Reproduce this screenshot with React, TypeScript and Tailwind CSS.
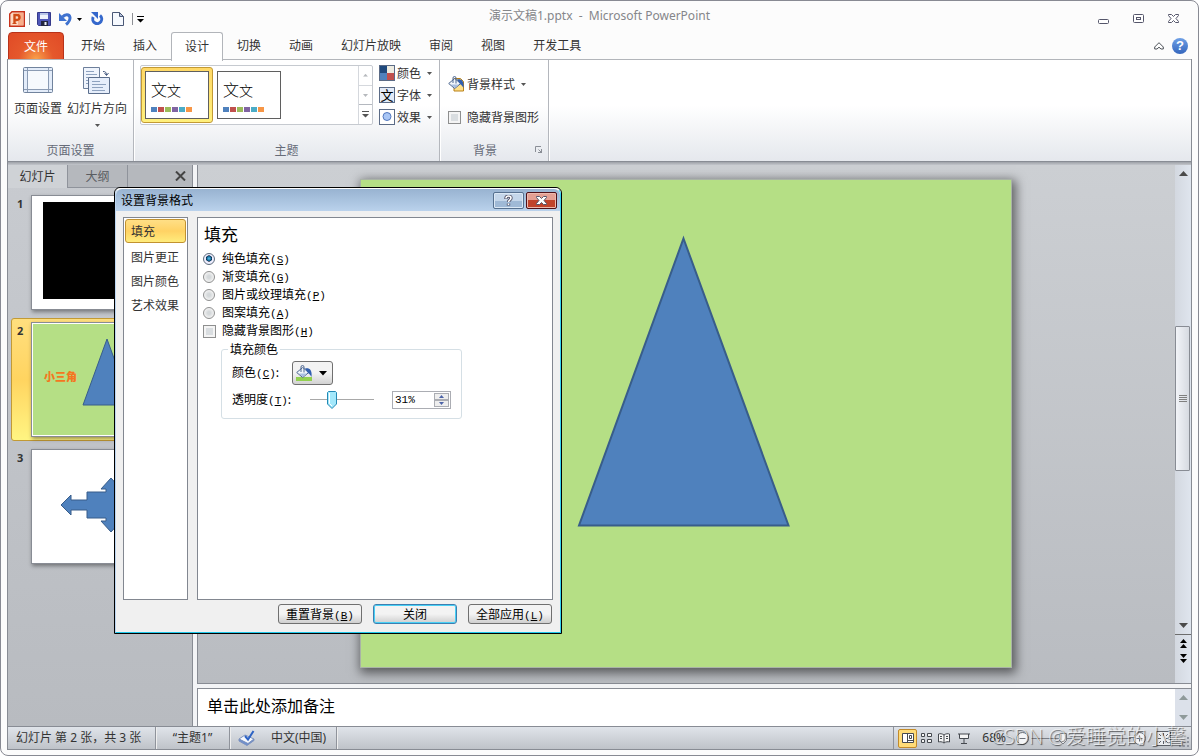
import { useState, type ReactNode } from 'react';

const TABS = ['开始', '插入', '设计', '切换', '动画', '幻灯片放映', '审阅', '视图', '开发工具'];
const FILLS = [
  ['纯色填充', 'S'],
  ['渐变填充', 'G'],
  ['图片或纹理填充', 'P'],
  ['图案填充', 'A'],
];
const NAV = ['填充', '图片更正', '图片颜色', '艺术效果'];

function Caret({ className = 'text-[#555]' }: { className?: string }) {
  return (
    <svg width="5" height="3" viewBox="0 0 5 3" className={className} aria-hidden>
      <path d="M0 0h5L2.5 3z" fill="currentColor" />
    </svg>
  );
}

function Arrow({ up, className = 'text-[#4a4a4a]' }: { up?: boolean; className?: string }) {
  return (
    <svg width="9" height="5" viewBox="0 0 9 5" className={className} aria-hidden>
      <path d={up ? 'M0 5h9L4.5 0z' : 'M0 0h9L4.5 5z'} fill="currentColor" />
    </svg>
  );
}

function Bucket({ page, swatch }: { page?: boolean; swatch?: boolean }) {
  return (
    <svg width="17" height="17" viewBox="0 0 17 17" aria-hidden>
      {page && <path d="M6 2.500h6.500l3 3v9.500H6z" fill="#ffe08a" stroke="#b98118" />}
      {swatch && <path d="M0 12h16v4H0z" fill="#92d050" />}
      <path d="M.7 7.500l6-5 6 5-6 5z" fill="#f2f6fc" stroke="#4d6690" />
      <path d="M3 8.500h8l-4.300 3.500z" fill="#a9bfe2" />
      <path d="M5 7V2a1.500 1.500 0 0 1 3 0v5.500" fill="none" stroke="#4d6690" />
      <path d="M9 3.500c4-1 7.500 1 6.500 8.500-1-2-2-3-3.500-4z" fill="#315fb0" />
    </svg>
  );
}

function Key({ k }: { k: string }) {
  return (
    <span className="font-['Liberation_Mono',monospace] text-[11px]">
      (<u>{k}</u>)
    </span>
  );
}

function TitleBar() {
  return (
    <div className="grid h-[31px] grid-cols-[1fr_auto_1fr] items-start">
      <div className="flex h-[36px] items-center pl-[2px]">
        <svg width="16" height="16" viewBox="0 0 16 16" aria-hidden>
          <path d="M3 .7h12.300v14.600H.7V3z" fill="#fdd9c4" stroke="#c8321b" strokeWidth="1.400" />
          <path d="M9 2h5v12H9z" fill="#f8ae8a" />
          <path d="M5.500 12.500V4H8a2.300 2.300 0 0 1 0 5H6" fill="none" stroke="#d04b16" strokeWidth="2.400" />
          <path d="M3.500 12.500h4" stroke="#d04b16" strokeWidth="1.200" />
        </svg>
        <span className="ml-1 h-3 w-px bg-[#8d8f94]" />
        <button aria-label="保存" className="ml-[7px]">
          <svg width="14" height="14" viewBox="0 0 14 14">
            <path d="M.5.5h13v13h-12l-1-1z" fill="#4f57b8" stroke="#34398a" />
            <path d="M3 1h8v6H3z" fill="#eef2fb" />
            <path d="M3 1h8v2H3z" fill="#b9c6e8" />
            <path d="M4 9h7v5H4z" fill="#23263f" />
            <path d="M7.500 10h2v3h-2z" fill="#eef2fb" />
          </svg>
        </button>
        <button aria-label="撤消" className="ml-2">
          <svg width="14" height="14" viewBox="0 0 14 14">
            <path d="M3.500 5C6 1.800 10.500 2 11 5.500c.3 3-1.500 5-4 7" fill="none" stroke="#3f72cf" strokeWidth="3" />
            <path d="M0 1v8h8z" fill="#3f72cf" />
          </svg>
        </button>
        <button aria-label="撤消列表" className="ml-1">
          <Caret className="text-black" />
        </button>
        <button aria-label="重复" className="ml-2">
          <svg width="14" height="14" viewBox="0 0 14 14">
            <path d="M3.200 5a4.500 4.500 0 1 0 6.800-1.500" fill="none" stroke="#3568cc" strokeWidth="3" />
            <path d="M1 0h7v7z" fill="#3568cc" />
          </svg>
        </button>
        <button aria-label="新建" className="ml-2">
          <svg width="12" height="14" viewBox="0 0 12 14">
            <path d="M.5.5h7l4 4v9H.5z" fill="#f6f9fe" stroke="#4a5876" />
            <path d="M7.500.5v4h4z" fill="#b6c3dc" stroke="#4a5876" />
          </svg>
        </button>
        <span className="ml-2 h-3 w-px bg-[#8d8f94]" />
        <button aria-label="自定义快速访问工具栏" className="ml-1">
          <svg width="7" height="7" viewBox="0 0 7 7">
            <path d="M0 0h7v1H0zM0 3h7L3.500 6.500z" />
          </svg>
        </button>
      </div>
      <div className="h-[31px] font-['Noto_Sans','Noto_Sans_CJK_SC',sans-serif] text-xs leading-[30px] whitespace-pre text-[#85868a]">
        演示文稿1.pptx  -  Microsoft PowerPoint
      </div>
      <div className="flex h-[35px] items-center justify-end gap-6 pr-[13px]">
        <button aria-label="最小化">
          <svg width="11" height="10" viewBox="0 0 11 10" fill="#fff" stroke="#55566b">
            <rect x=".5" y="5.500" width="10" height="4" rx="1" />
          </svg>
        </button>
        <button aria-label="还原">
          <svg width="11" height="9" viewBox="0 0 11 9" fill="#fff" stroke="#55566b">
            <rect x=".5" y=".5" width="10" height="8" rx="1" />
            <rect x="3.500" y="3.500" width="4" height="2" />
          </svg>
        </button>
        <button aria-label="关闭窗口">
          <svg width="11" height="9" viewBox="0 0 11 9" fill="#fff" stroke="#55566b">
            <path d="M.5.5h3l2 2 2-2h3v1L8 4.500l2.500 3v1h-3l-2-2-2 2h-3v-1L3 4.500.5 1.500z" />
          </svg>
        </button>
      </div>
    </div>
  );
}

function RibbonTabs() {
  return (
    <div className="flex h-[28px] items-stretch text-xs leading-[26px] text-[#333]">
      <button className="mr-[3px] w-14 rounded-t border border-[#b8321a] bg-[radial-gradient(ellipse_at_bottom,#f9a04a_0%,#e5582c_45%,#e04a26_100%)] pb-px text-white">
        文件
      </button>
      <nav className="flex">
        {TABS.map((t) => (
          <button
            key={t}
            className={
              t === '设计'
                ? 'z-10 -mb-px rounded-t-[3px] border border-b-0 border-[#b2b5ba] bg-white px-[13px] pb-[3px]'
                : 'px-[14px] pb-[2px]'
            }
          >
            {t}
          </button>
        ))}
      </nav>
      <div className="ml-auto flex items-center gap-2 pr-1 pb-px">
        <button aria-label="功能区最小化">
          <svg width="10" height="8" viewBox="0 0 10 8" fill="#fff" stroke="#4c5158">
            <path d="M5 .7L9.300 5v2H7L5 5.200 3 7H.7V5z" />
          </svg>
        </button>
        <button
          aria-label="帮助"
          className="h-4 w-4 rounded-full bg-linear-to-b from-[#6fa0e6] to-[#3566bd] font-['Liberation_Sans',sans-serif] text-[13px] leading-4 font-bold text-white"
        >
          ?
        </button>
      </div>
    </div>
  );
}

function Group({ label, className = '', children, corner }: { label: string; className?: string; children: ReactNode; corner?: ReactNode }) {
  return (
    <section className={'flex flex-col border-r border-[#b4b7bd] shadow-[1px_0_0_#fff] ' + className}>
      <div className="flex-1">{children}</div>
      <div className="flex h-[22px] items-center text-xs text-[#666b78]">
        <span className="flex-1 text-center">{label}</span>
        {corner}
      </div>
    </section>
  );
}

function ThemeCard({ selected }: { selected?: boolean }) {
  return (
    <button
      className={
        'h-14 w-[72px] rounded-[3px] border p-[3px] ' +
        (selected ? 'border-[#c29a35] bg-linear-to-b from-[#ffd866] to-[#fff07c]' : 'border-transparent')
      }
    >
      <span className="flex h-full flex-col justify-between border border-[#5f5f5f] bg-white px-[5px] pt-[5px] pb-[6px]">
        <span className="text-left leading-[26px] font-light text-black">
          <span className="text-base">文</span>
          <span className="text-sm">文</span>
        </span>
        <span className="flex gap-px">
          <i className="h-[5px] w-[6px] bg-[#4f81bd]" />
          <i className="h-[5px] w-[6px] bg-[#c0504d]" />
          <i className="h-[5px] w-[6px] bg-[#9bbb59]" />
          <i className="h-[5px] w-[6px] bg-[#8064a2]" />
          <i className="h-[5px] w-[6px] bg-[#4bacc6]" />
          <i className="h-[5px] w-[6px] bg-[#f79646]" />
        </span>
      </span>
    </button>
  );
}

function Ribbon() {
  return (
    <div className="flex h-[103px] border-y border-t-[#b2b5ba] border-b-[#888c94] bg-linear-to-b from-white from-45% to-[#e5e8ed] text-xs text-[#333]">
      <Group label="页面设置" className="w-[126px]">
        <div className="flex gap-[5px] pt-[7px] pl-[6px]">
          <button className="flex w-12 flex-col items-center">
            <svg width="30" height="26" viewBox="0 0 30 26" fill="none">
              <rect x=".5" y=".5" width="29" height="25" rx="1" fill="#e3ecf9" stroke="#71839d" />
              <path d="M5 4h20v18H5z" fill="#f6f9fd" />
              <path d="M4.500 1v24M25.500 1v24M1 3.500h28M1 22.500h28" stroke="#8b9bb3" />
            </svg>
            <span className="mt-[6px] leading-[18px]">页面设置</span>
          </button>
          <button className="flex w-[60px] flex-col items-center">
            <svg width="28" height="28" viewBox="0 0 28 28" fill="none">
              <path d="M.5.500h16v21H.5z" fill="#eff4fc" stroke="#6d7f9b" />
              <path d="M3 4.500h8M3 7.500h11M3 10.500h2M3 13.500h2M3 16.500h2" stroke="#8ea2bf" />
              <path d="M5.500 10.500h21v16h-21z" fill="#e6eefb" stroke="#5b6e8c" />
              <path d="M9 14.500h8M9 17.500h14M9 20.500h11M9 23.500h13" stroke="#8ea2bf" />
              <path d="M20 4.500c2.500 0 3.500 1 3.500 3.500M21.500 6l2 2.500 2-2.500" stroke="#3f557c" />
            </svg>
            <span className="mt-1 leading-[18px]">幻灯片方向</span>
            <span className="mt-[7px]"><Caret /></span>
          </button>
        </div>
      </Group>
      <Group label="主题" className="w-[306px]">
        <div className="flex pt-[5px] pl-[6px]">
          <div className="flex h-[60px] w-[233px] rounded-[2px] border border-[#c6cad0] bg-white">
            <div className="flex flex-1 pt-px">
              <ThemeCard selected />
              <ThemeCard />
            </div>
            <div className="flex w-[14px] flex-col border-l border-[#d5d8dd]">
              <button aria-label="上一行" className="flex flex-1 rotate-180 items-center justify-center"><Caret className="text-[#b6b9bd]" /></button>
              <button aria-label="下一行" className="flex flex-1 items-center justify-center border-t border-[#d5d8dd]"><Caret className="text-[#b6b9bd]" /></button>
              <button aria-label="其他主题" className="flex flex-1 items-center justify-center border-t border-[#b4b8bf]">
                <svg width="7" height="7" viewBox="0 0 7 7" fill="#555">
                  <path d="M0 0h7v1H0zM0 3h7L3.500 6.500z" />
                </svg>
              </button>
            </div>
          </div>
          <div className="ml-[6px] flex flex-col gap-[6px]">
            <button className="flex h-4 items-center gap-[2px]">
              <svg width="16" height="16" viewBox="0 0 16 16">
                <path d="M0 0h16v16H0z" fill="#5b6b86" />
                <path d="M1 1h7v7H1z" fill="#1f497d" />
                <path d="M8 1h7v7H8z" fill="#eeece1" />
                <path d="M1 8h7v7H1z" fill="#4f81bd" />
                <path d="M8 8h7v7H8z" fill="#c0504d" />
              </svg>
              <span className="mr-1">颜色</span>
              <Caret />
            </button>
            <button className="flex h-4 items-center gap-[2px]">
              <span className="h-4 w-4 border border-[#5b6b86] bg-[#e3ebf8] text-[13px] leading-[13px] text-black">文</span>
              <span className="mr-1">字体</span>
              <Caret />
            </button>
            <button className="flex h-4 items-center gap-[2px]">
              <svg width="16" height="16" viewBox="0 0 16 16">
                <rect x=".5" y=".5" width="15" height="15" fill="#fff" stroke="#5b6b86" />
                <circle cx="8" cy="7.500" r="4" fill="#a9c6f5" stroke="#5277bd" />
              </svg>
              <span className="mr-1">效果</span>
              <Caret />
            </button>
          </div>
        </div>
      </Group>
      <Group
        label="背景"
        className="w-[109px]"
        corner={
          <button aria-label="设置背景格式" className="mr-[5px] ml-[5px]">
            <svg width="8" height="8" viewBox="0 0 8 8" fill="none" stroke="#8a8e96">
              <path d="M.5 6V.5H6M3.500 3.500l3 3M6.500 3v4M3 6.500h4" />
            </svg>
          </button>
        }
      >
        <div className="flex flex-col gap-[15px] pt-[15px] pl-2">
          <button className="flex h-[18px] items-center gap-[2px]">
            <Bucket page />
            <span className="mr-1">背景样式</span>
            <Caret />
          </button>
          <label className="flex h-[18px] items-center gap-[6px]">
            <input type="checkbox" className="h-[13px] w-[13px] appearance-none border border-[#8e8f8f] bg-[#d9dde0] shadow-[inset_0_0_0_2px_#f4f4f4]" />
            隐藏背景图形
          </label>
        </div>
      </Group>
    </div>
  );
}

function Thumb({ n, selected, children }: { n: number; selected?: boolean; children: ReactNode }) {
  return (
    <li
      className={
        'flex h-[123px] items-start rounded-[3px] border py-[3px] pl-[5px] ' +
        (selected ? 'border-[#c29a35] bg-linear-to-b from-[#ffdf7e] via-[#ffd460] to-[#fff582]' : 'border-transparent')
      }
    >
      <b className="w-[14px] font-['Open_Sans',sans-serif] text-[11px] leading-[18px] text-[#333]">{n}</b>
      <div className="h-[115px] w-[153px] border border-[#888c94] bg-white shadow-[1px_2px_4px_#0006]">{children}</div>
    </li>
  );
}

function SlidePanel() {
  return (
    <aside className="flex w-[185px] flex-col border-r border-[#888c94] bg-linear-to-b from-[#c8cbd0] to-[#b8bbc0] text-xs text-[#333]">
      <div className="flex h-[23px]">
        <button className="w-[59px] bg-[#cfd2d6] pb-[2px]">幻灯片</button>
        <button className="w-[61px] border border-t-0 border-[#8f939b] bg-[#b5b8bd] text-[#5a5c61]">大纲</button>
        <div className="flex flex-1 items-center justify-end border-b border-[#8f939b] bg-[#b5b8bd] pr-[6px]">
          <button aria-label="关闭窗格">
            <svg width="11" height="10" viewBox="0 0 11 10" stroke="#444" strokeWidth="2">
              <path d="M1 .5l9 9M10 .5l-9 9" />
            </svg>
          </button>
        </div>
      </div>
      <ol className="flex flex-col gap-1 pt-[3px] pr-px pl-[3px]">
        <Thumb n={1}>
          <div className="mt-[6px] ml-[11px] h-[97px] w-[130px] bg-black" />
        </Thumb>
        <Thumb n={2} selected>
          <div className="h-full border border-white bg-[#b5df85] pt-[14px] pl-[11px]">
            <div className="flex items-center">
              <span className="pt-2 text-[11px] font-black text-[#f47721]">小三角</span>
              <svg width="50" height="68" viewBox="0 0 50 68" className="ml-[5px] shrink-0" aria-hidden>
                <path d="M25 1l24 66H1z" fill="#4f81bd" stroke="#385d8a" />
              </svg>
            </div>
          </div>
        </Thumb>
        <Thumb n={3}>
          <svg width="151" height="113" viewBox="0 0 151 113" aria-hidden>
            <path
              d="M29 55l10-10v5h16v-8h19v-3h-5l10-11 10 11h-5v3h19v8h16v-5l10 10-10 10v-5h-16v8H84v3h5L79 82 69 71h5v-3H55v-8H39v5z"
              fill="#4f81bd"
              stroke="#385d8a"
            />
          </svg>
        </Thumb>
      </ol>
    </aside>
  );
}

function Editor() {
  return (
    <main className="flex min-w-0 flex-1 flex-col">
      <div className="flex min-h-0 flex-1 border-b border-l border-[#888c94] bg-linear-to-b from-[#cccfd3] to-[#b9bcc1]">
        <div className="flex min-h-0 flex-1 items-center justify-center pt-[14px] pr-px pb-[15px]">
          <div className="aspect-[4/3] h-full border border-[#a9b3a6] bg-[#b5df85] shadow-[2px_3px_10px_2px_#0008]">
            <svg viewBox="0 0 649 487" className="h-full w-full" aria-hidden>
              <path d="M322 58.500L427 345.500H217.500z" fill="#4f81bd" stroke="#385d8a" strokeWidth="2" />
            </svg>
          </div>
        </div>
        <div className="flex w-4 flex-col items-center bg-linear-to-r from-[#d3d8e0] to-[#dfe5ee]">
          <button aria-label="向上滚动" className="flex h-4 items-center"><Arrow up /></button>
          <div className="flex-1" />
          <div className="flex h-[145px] w-[15px] items-center justify-center self-start rounded-[1px] border border-[#888c94] bg-linear-to-r from-[#f2f4f8] to-[#d6dae1]">
            <svg width="8" height="7" viewBox="0 0 8 7" fill="#7f7f7f" aria-hidden>
              <path d="M0 0h8v1H0zM0 2h8v1H0zM0 4h8v1H0zM0 6h8v1H0z" />
            </svg>
          </div>
          <div className="flex-1" />
          <button aria-label="向下滚动" className="flex h-[18px] items-center"><Arrow /></button>
          <div className="flex w-full flex-col items-center gap-[6px] border-t border-[#6d6d6d] pt-1 pb-5">
            <button aria-label="上一张幻灯片">
              <svg width="7" height="9" viewBox="0 0 7 9"><path d="M0 4h7L3.500 0zM0 9h7L3.500 5z" /></svg>
            </button>
            <button aria-label="下一张幻灯片">
              <svg width="7" height="9" viewBox="0 0 7 9"><path d="M0 0h7L3.500 4zM0 5h7L3.500 9z" /></svg>
            </button>
          </div>
        </div>
      </div>
      <div className="mt-1 flex h-[38px] border-t border-l border-[#888c94] bg-white">
        <p className="flex-1 pl-[9px] text-base leading-8 text-black">单击此处添加备注</p>
        <div className="flex w-4 flex-col items-center justify-between bg-[#dce1ea] py-[6px]">
          <Arrow up className="text-[#8f9a9a]" />
          <Arrow className="text-[#8f9a9a]" />
        </div>
      </div>
    </main>
  );
}

function StatusBar() {
  const cell = 'flex items-center border-r border-[#8f939b] shadow-[1px_0_0_#eee]';
  return (
    <footer className="flex h-[24px] border-y border-[#888c94] bg-linear-to-b from-[#e0e4ea] to-[#bfc3c9] font-['Noto_Sans','Noto_Sans_CJK_SC',sans-serif] text-xs text-[#333]">
      <span className={cell + ' w-[148px] pl-2 whitespace-pre'}>幻灯片 第 2 张，共 3 张</span>
      <span className={cell + ' w-[74px] justify-center'}>“主题1”</span>
      <span className={cell + ' w-[107px] gap-4 pl-2'}>
        <svg width="17" height="16" viewBox="0 0 17 16" fill="none" aria-hidden>
          <path d="M1 9l6-4 9 4-6 5.500z" fill="#f5f8fd" stroke="#7d92bd" />
          <path d="M1 9v2l8 4.500 7-5V9l-6 4.500z" fill="#6d8fd0" stroke="#7d92bd" />
          <path d="M7 6l3 3.500L15.500 1" stroke="#2c62c4" strokeWidth="2" />
        </svg>
        中文(中国)
      </span>
      <div className="ml-auto flex items-center border-l border-[#8f939b] pl-1">
        <button aria-label="普通视图" className="flex h-[19px] w-[19px] items-center justify-center rounded-[2px] border border-[#c28a2a] bg-[#ffdc78]">
          <svg width="12" height="10" viewBox="0 0 12 10" fill="#fff" stroke="#45494f">
            <path d="M.5.500h11v9H.5zM5.500.500v9M7.500 2.500h2v3h-2zM5.500 7.500h6" />
          </svg>
        </button>
        <button aria-label="幻灯片浏览" className="ml-1">
          <svg width="11" height="10" viewBox="0 0 11 10" fill="#f5f5f5" stroke="#45494f">
            <path d="M.5.500h3v3h-3zM6.500.500h4v3h-4zM.5 6.500h3v3h-3zM6.500 6.500h4v3h-4z" />
          </svg>
        </button>
        <button aria-label="阅读视图" className="ml-[6px]">
          <svg width="12" height="11" viewBox="0 0 12 11" fill="#f5f5f5" stroke="#45494f">
            <path d="M6 2C4 .5 2 .5.5 1v8C2 8.500 4 8.500 6 10c2-1.500 4-1.500 5.500-1V1C10 .5 8 .5 6 2zM6 2v8M2 3.500h2M2 5.500h2M8 3.500h2M8 5.500h2" />
          </svg>
        </button>
        <button aria-label="幻灯片放映视图" className="ml-2">
          <svg width="12" height="11" viewBox="0 0 12 11" fill="#f5f5f5" stroke="#45494f">
            <path d="M0 1h12M1.500 1v4.500h9V1M6 5.500V10M3 10.500h6" />
          </svg>
        </button>
        <span className="ml-3">68%</span>
        <button aria-label="缩小" className="ml-[10px]">
          <svg width="13" height="13" viewBox="0 0 13 13" fill="#f4f5f7" stroke="#6b6f76">
            <circle cx="6.500" cy="6.500" r="6" />
            <path d="M3.500 6.500h6" />
          </svg>
        </button>
        <div className="relative h-[13px] w-[104px]">
          <svg width="104" height="13" viewBox="0 0 104 13" fill="#f4f5f7" stroke="#7b7f86" aria-hidden>
            <path d="M2 6.500h100M52.500 4v5" />
            <path d="M30.500 1.500h7v7L34 12l-3.500-3.500z" />
          </svg>
          <input type="range" aria-label="显示比例" className="absolute inset-0 w-full opacity-0" />
        </div>
        <button aria-label="放大">
          <svg width="13" height="13" viewBox="0 0 13 13" fill="#f4f5f7" stroke="#6b6f76">
            <circle cx="6.500" cy="6.500" r="6" />
            <path d="M3.500 6.500h6M6.500 3.500v6" />
          </svg>
        </button>
        <button aria-label="适应窗口" className="ml-[10px]">
          <svg width="15" height="15" viewBox="0 0 15 15" fill="none" stroke="#5b5f66">
            <rect x=".5" y=".5" width="14" height="14" fill="#eceef1" />
            <path d="M7.500 2v3M7.500 10v3M2 7.500h3M10 7.500h3M3 3l2 2M12 3l-2 2M3 12l2-2M12 12l-2-2" />
          </svg>
        </button>
        <svg width="11" height="11" viewBox="0 0 11 11" className="mt-2 mr-px ml-2" fill="#9095a0" aria-hidden>
          <path d="M8 0h2v2H8zM4 4h2v2H4zM8 4h2v2H8zM0 8h2v2H0zM4 8h2v2H4zM8 8h2v2H8z" />
        </svg>
      </div>
    </footer>
  );
}

function FormatDialog() {
  const [fill, setFill] = useState('S');
  const [alpha, setAlpha] = useState(31);
  const push =
    'h-5 w-[84px] rounded-[3px] border text-xs leading-[18px] whitespace-nowrap bg-linear-to-b from-[#f3f3f3] from-50% to-[#cfcfcf] ';

  return (
    <div
      role="dialog"
      aria-labelledby="dlg-title"
      className="absolute top-[186px] left-[113px] z-20 flex h-[447px] w-[448px] flex-col rounded-t-md border border-black bg-[#f0f0f0] text-xs text-black"
    >
      <div className="flex flex-1 flex-col rounded-t-md border border-t-white border-r-[#35d3f2] border-b-[#1fc8ea] border-l-[#bcd6f2]">
        <div className="flex h-[22px] items-center rounded-t-md bg-linear-to-b from-[#98b3d1] to-[#bad2ec] pr-[3px] pl-[5px]">
          <h1 id="dlg-title" className="flex-1 pb-px">设置背景格式</h1>
          <button aria-label="帮助" className="mr-[2px] flex h-[17px] w-[31px] items-center justify-center rounded-[2px] border border-[#56708f] bg-linear-to-b from-[#c4d6ea] from-50% to-[#9fb9d6] to-50% shadow-[inset_0_0_0_1px_#dbe8f5]">
            <svg width="9" height="11" viewBox="0 0 9 11" fill="none">
              <path d="M2 4V3a2.500 2 0 0 1 5 0c0 2-2.500 2-2.500 4M4.500 8.500v2" stroke="#55566b" strokeWidth="3.400" />
              <path d="M2 3.500V3a2.500 2 0 0 1 5 0c0 2-2.500 2-2.500 4M4.500 8.500v1.500" stroke="#fff" strokeWidth="1.600" />
            </svg>
          </button>
          <button aria-label="关闭" className="flex h-[17px] w-[31px] items-center justify-center rounded-[2px] border border-[#4f1018] bg-linear-to-b from-[#e5a094] from-45% to-[#c0432b] to-50% shadow-[inset_0_0_0_1px_#edb9ae]">
            <svg width="11" height="9" viewBox="0 0 11 9" fill="#fff" stroke="#55566b">
              <path d="M.5.5h3l2 2 2-2h3v1L8 4.500l2.500 3v1h-3l-2-2-2 2h-3v-1L3 4.500.5 1.500z" />
            </svg>
          </button>
        </div>

        <div className="mt-[6px] flex min-h-0 flex-1 gap-[9px] px-[7px]">
          <nav className="w-[65px] border border-[#828790] bg-white p-px text-[#333]">
            {NAV.map((n, i) => (
              <button
                key={n}
                className={
                  i === 0
                    ? 'mb-[2px] h-6 w-full rounded-[3px] border border-[#c2922f] bg-linear-to-b from-[#ffdf86] via-[#ffd264] to-[#ffec7c] pl-[5px] text-left'
                    : 'block h-6 w-full pl-[6px] text-left whitespace-nowrap'
                }
              >
                {n}
              </button>
            ))}
          </nav>
          <div className="flex-1 border border-[#828790] bg-white px-[5px] pt-1">
            <h2 className="mb-1 pl-px text-[17px] leading-6">填充</h2>
            {FILLS.map(([name, k]) => (
              <label key={k} className="flex h-[18px] items-center gap-[7px]">
                <input
                  type="radio"
                  name="fill"
                  checked={fill === k}
                  onChange={() => setFill(k)}
                  className="h-3 w-3 appearance-none rounded-full border border-[#8e8f8f] bg-[radial-gradient(circle,#d4d8da_20%,#f3f3f3_70%)] checked:border-[#5d6c7b] checked:bg-[radial-gradient(circle_at_50%_45%,#5cc8ee_0,#0b5a8c_32%,#123_38%,#eef_46%)]"
                />
                <span>
                  {name}
                  <Key k={k} />
                </span>
              </label>
            ))}
            <label className="flex h-[18px] items-center gap-[6px]">
              <input type="checkbox" className="h-[13px] w-[13px] appearance-none border border-[#8e8f8f] bg-[#d9dde0] shadow-[inset_0_0_0_2px_#f4f4f4]" />
              <span>
                隐藏背景图形
                <Key k="H" />
              </span>
            </label>
            <fieldset className="ml-[18px] w-[241px] rounded-[3px] border border-[#d5dfe5] pr-[10px] pb-[9px] pl-[10px]">
              <legend className="-ml-1 px-[2px] leading-[18px]">填充颜色</legend>
              <div className="flex h-[27px] items-center pt-[3px]">
                <label htmlFor="fill-color" className="w-[60px] whitespace-nowrap">
                  颜色
                  <Key k="C" />:
                </label>
                <button id="fill-color" className="flex h-6 w-[41px] items-center gap-[6px] rounded-[3px] border border-[#707070] bg-linear-to-b from-[#f3f3f3] from-50% to-[#d2d2d2] pl-[3px]">
                  <Bucket swatch />
                  <svg width="8" height="5" viewBox="0 0 8 5"><path d="M0 0h8L4 4.500z" /></svg>
                </button>
              </div>
              <div className="mt-[6px] flex h-[18px] items-center">
                <label htmlFor="alpha" className="w-[60px] whitespace-nowrap">
                  透明度
                  <Key k="T" />:
                </label>
                <div className="relative mx-[18px] h-[18px] w-16">
                  <div className="mt-2 h-px bg-[#a8a8a8]" />
                  <svg
                    width="10"
                    height="18"
                    viewBox="0 0 10 18"
                    className="absolute top-0"
                    style={{ left: Math.round(alpha * 0.54) }}
                    aria-hidden
                  >
                    <path d="M1.500.500h7l1 1V13L5 17.500.5 13V1.500z" fill="#a4e8fb" stroke="#2389b5" />
                    <path d="M2.500 2v10.500L5 15" fill="none" stroke="#fff" />
                  </svg>
                  <input
                    id="alpha"
                    type="range"
                    value={alpha}
                    onChange={(e) => setAlpha(Number(e.target.value))}
                    className="absolute inset-0 w-full opacity-0"
                  />
                </div>
                <div className="flex h-[18px] w-[59px] border border-[#abadb3] p-px">
                  <input
                    aria-label="透明度百分比"
                    value={alpha + '%'}
                    onChange={(e) => setAlpha(Math.min(100, parseInt(e.target.value) || 0))}
                    className="w-10 min-w-0 flex-1 pl-px font-['Liberation_Mono',monospace] text-[11px]"
                  />
                  <div className="flex w-[15px] flex-col">
                    <button aria-label="增加" onClick={() => setAlpha(Math.min(100, alpha + 1))} className="flex flex-1 rotate-180 items-center justify-center border border-[#abadb3] bg-[#eee]">
                      <Caret className="text-[#4d64a8]" />
                    </button>
                    <button aria-label="减少" onClick={() => setAlpha(Math.max(0, alpha - 1))} className="flex flex-1 items-center justify-center border border-[#abadb3] bg-[#eee]">
                      <Caret className="text-[#4d64a8]" />
                    </button>
                  </div>
                </div>
              </div>
            </fieldset>
          </div>
        </div>

        <div className="flex justify-end gap-[11px] pt-1 pr-2 pb-2">
          <button className={push + 'border-[#707070]'}>
            重置背景
            <Key k="B" />
          </button>
          <button className={push + 'border-[#3c7fb1] shadow-[inset_0_0_0_1px_#48d0f5]'}>关闭</button>
          <button className={push + 'border-[#707070]'}>
            全部应用
            <Key k="L" />
          </button>
        </div>
      </div>
    </div>
  );
}

export default function App() {
  return (
    <div className="relative flex h-screen min-h-[640px] flex-col overflow-hidden rounded-lg border border-[#888a93] bg-[#fcfcfc] px-[6px] pb-[5px] font-['Noto_Sans_CJK_SC',sans-serif]">
      <TitleBar />
      <div className="-mb-px pl-px"><RibbonTabs /></div>
      <div className="flex min-h-0 flex-1 flex-col border-x border-[#888c94]">
        <Ribbon />
        <div className="h-[3px] bg-linear-to-b from-[#9da1a8] to-[#c3c6cb]" />
        <div className="flex min-h-0 flex-1 bg-[#f3f4f6]">
          <SlidePanel />
          <div className="w-1" />
          <Editor />
        </div>
        <StatusBar />
      </div>
      <FormatDialog />
      <div className="pointer-events-none absolute right-3 bottom-1 z-30 font-['Open_Sans','Noto_Sans_CJK_SC',sans-serif] text-xl leading-7 font-light text-white/70 [text-shadow:1px_1px_1px_#0009]">
        CSDN @爱睡觉的小馨
      </div>
    </div>
  );
}
